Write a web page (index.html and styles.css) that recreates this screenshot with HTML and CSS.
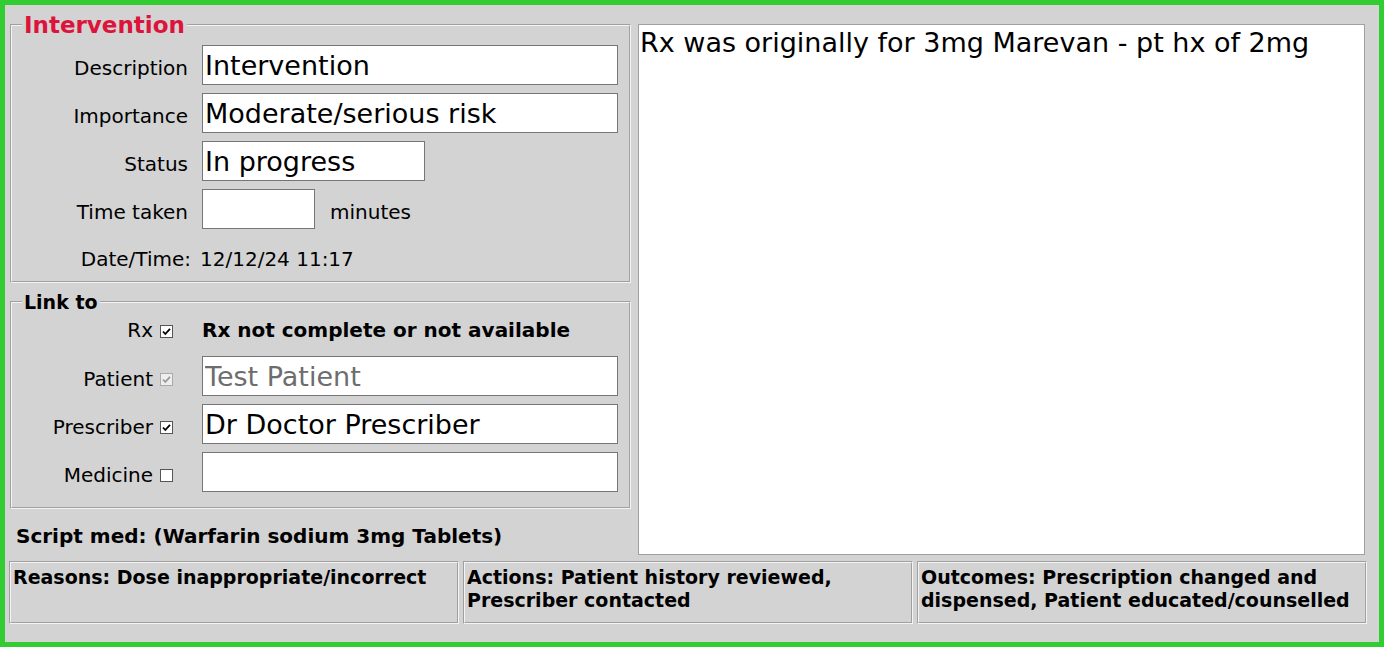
FILE: index.html
```html
<!DOCTYPE html>
<html lang="en">
<head>
  <meta charset="UTF-8" />
  <title>Intervention</title>
  <link rel="stylesheet" href="styles.css">
</head>
<body>
  <div class="top">
    <div class="side">
      <fieldset class="box details">
        <legend class="title">Intervention</legend>
        <div class="form">
          <label>Description</label>
          <input class="field wide" type="text" value="Intervention">

          <label>Importance</label>
          <input class="field wide" type="text" value="Moderate/serious risk">

          <label>Status</label>
          <input class="field status" type="text" value="In progress">

          <label>Time taken</label>
          <div class="inline">
            <input class="field mins" type="text" value="">
            <span>minutes</span>
          </div>

          <label class="stamp-label">Date/Time:</label>
          <div class="stamp">12/12/24 11:17</div>
        </div>
      </fieldset>

      <fieldset class="box links">
        <legend class="sub">Link to</legend>
        <div class="form">
          <label class="check">Rx
            <svg class="tick" width="13" height="13" viewBox="0 0 13 13"><rect x="0.5" y="0.5" width="12" height="12" fill="#fff" stroke="#555"/><path d="M3 6.5 L5.3 9 L10 3.8" fill="none" stroke="#000" stroke-width="1.8"/></svg>
          </label>
          <div class="note">Rx not complete or not available</div>

          <label class="check">Patient
            <svg class="tick" width="13" height="13" viewBox="0 0 13 13"><rect x="0.5" y="0.5" width="12" height="12" fill="#eee" stroke="#aaa"/><path d="M3 6.5 L5.3 9 L10 3.8" fill="none" stroke="#999" stroke-width="1.8"/></svg>
          </label>
          <input class="field wide" type="text" value="Test Patient" disabled>

          <label class="check">Prescriber
            <svg class="tick" width="13" height="13" viewBox="0 0 13 13"><rect x="0.5" y="0.5" width="12" height="12" fill="#fff" stroke="#555"/><path d="M3 6.5 L5.3 9 L10 3.8" fill="none" stroke="#000" stroke-width="1.8"/></svg>
          </label>
          <input class="field wide" type="text" value="Dr Doctor Prescriber">

          <label class="check">Medicine
            <svg class="tick" width="13" height="13" viewBox="0 0 13 13"><rect x="0.5" y="0.5" width="12" height="12" fill="#fff" stroke="#555"/></svg>
          </label>
          <input class="field wide" type="text" value="">
        </div>
      </fieldset>

      <p class="script-med">Script med: (Warfarin sodium 3mg Tablets)</p>
    </div>

    <textarea class="notes">Rx was originally for 3mg Marevan - pt hx of 2mg</textarea>
  </div>

  <div class="summary">
    <div class="cell">Reasons: Dose inappropriate/incorrect</div>
    <div class="cell">Actions: Patient history reviewed, Prescriber contacted</div>
    <div class="cell">Outcomes: Prescription changed and dispensed, Patient educated/counselled</div>
  </div>
</body>
</html>
```

FILE: styles.css
```css
* {
  box-sizing: border-box;
}

html, body {
  height: 100%;
}

body {
  margin: 0;
  padding: 7px 0 0 0;
  border: 5px solid #32cd32;
  background: #d3d3d3;
  font-family: "DejaVu Sans", Verdana, sans-serif;
  font-size: 20px;
  color: #000;
  overflow: hidden;
}

.top {
  display: grid;
  grid-template-columns: 621px 727px;
  column-gap: 7px;
  padding-left: 5px;
}

.box {
  margin: 0;
  border: 2px groove #f4f4f4;
  min-width: 0;
}

.details {
  padding: 7px 11px 2px 10px;
}

.links {
  margin-top: 8px;
  padding: 0 11px 15px 10px;
}

.title {
  padding: 0 2px;
  font-size: 23px;
  line-height: 26px;
  font-weight: bold;
  color: #dc143c;
}

.sub {
  padding: 0 2px;
  font-size: 19px;
  line-height: 22px;
  font-weight: bold;
}

.form {
  display: grid;
  grid-template-columns: 166px 1fr;
  column-gap: 14px;
  row-gap: 8px;
  align-items: baseline;
}

.form label {
  text-align: right;
  white-space: nowrap;
}

.field {
  height: 40px;
  margin: 0;
  padding: 0 2px;
  border: 1px solid #767676;
  background: #fff;
  font-family: inherit;
  font-size: 27px;
  color: #000;
}

.field:disabled {
  color: #6d6d6d;
  background: #fff;
  border-color: #767676;
}

.wide {
  width: 416px;
}

.status {
  width: 223px;
}

.mins {
  width: 113px;
}

.inline {
  display: flex;
  align-items: baseline;
  gap: 15px;
}

/* date row: a touch lower than the input rows */
.stamp-label,
.stamp {
  height: 42px;
  line-height: 44px;
}

.stamp-label {
  margin-right: -3px;
  padding-left: 4px;
}

.stamp {
  margin-left: -2px;
}

.check {
  display: flex;
  justify-content: flex-end;
  align-items: baseline;
  gap: 7px;
  padding-right: 15px;
}

.tick {
  display: block;
  align-self: center;
  margin-top: 2px;
}

.note {
  height: 35px;
  line-height: 35px;
  font-weight: bold;
}

.script-med {
  margin: 16px 0 0 6px;
  font-weight: bold;
  line-height: 22px;
}

.notes {
  margin: 12px 0 0 0;
  height: 531px;
  padding: 2px 1px;
  border: 1px solid #a0a0a0;
  background: #fff;
  font-family: inherit;
  font-size: 27px;
  line-height: 31px;
  resize: none;
  color: #000;
}

.summary {
  display: grid;
  grid-template-columns: repeat(3, 450px);
  column-gap: 4px;
  margin: 6px 0 0 4px;
}

.cell {
  height: 63px;
  padding: 3px 3px 3px 2px;
  border: 2px groove #f4f4f4;
  font-size: 19px;
  font-weight: bold;
  line-height: 23px;
}
```
